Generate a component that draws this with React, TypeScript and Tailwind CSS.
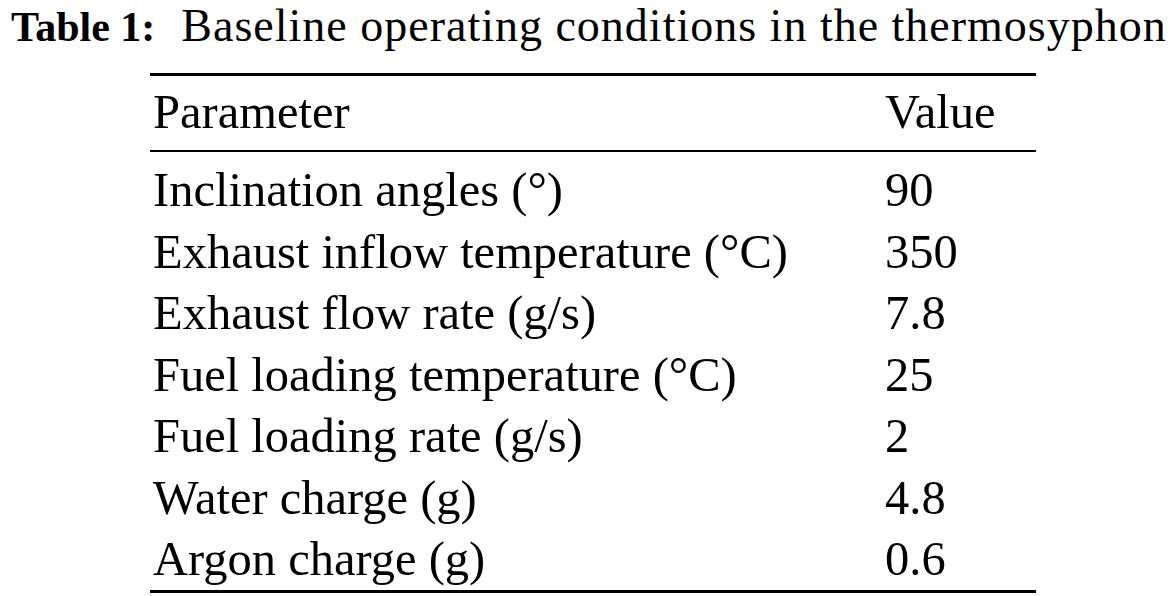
const ROWS: [string, string][] = [
  ["Inclination angles (°)", "90"],
  ["Exhaust inflow temperature (°C)", "350"],
  ["Exhaust flow rate (g/s)", "7.8"],
  ["Fuel loading temperature (°C)", "25"],
  ["Fuel loading rate (g/s)", "2"],
  ["Water charge (g)", "4.8"],
  ["Argon charge (g)", "0.6"],
];

export default function App() {
  return (
    <div className="w-[1175px] h-[596px] bg-white text-black flex flex-col items-center font-['Liberation_Serif',serif] overflow-hidden">
      <p className="self-start ml-[11px] text-[46px] leading-[51px] whitespace-nowrap">
        <span className="font-bold text-[42px]">Table 1:</span>
        <span className="ml-[26px] tracking-[1px]">Baseline operating conditions in the thermosyphon</span>
      </p>
      <table className="mt-[20px] ml-[11px] w-[886px] border-collapse text-[48.5px] leading-[61.5px]">
        <thead>
          <tr className="border-t-[3px] border-b-[2px] border-black">
            <th className="text-left font-normal pl-[3px] pt-[5px] pb-[7.5px]">Parameter</th>
            <th className="text-left font-normal w-[151px] pt-[5px] pb-[7.5px]">Value</th>
          </tr>
        </thead>
        <tbody className="border-b-[3px] border-black">
          {ROWS.map(([p, v], i) => (
            <tr key={p}>
              <td className={`pl-[3px] ${i === 0 ? "pt-[7px]" : ""}`}>{p}</td>
              <td className={i === 0 ? "pt-[7px]" : ""}>{v}</td>
            </tr>
          ))}
        </tbody>
      </table>
    </div>
  );
}
